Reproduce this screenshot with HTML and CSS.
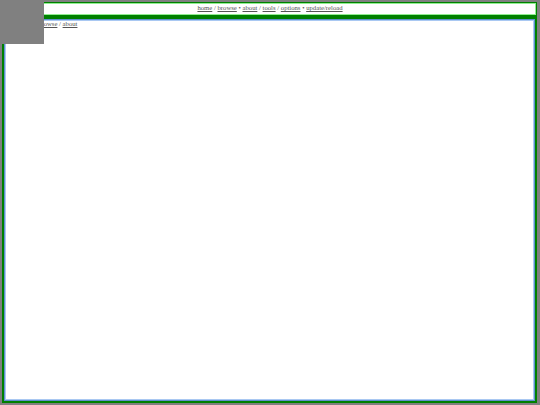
FILE: index.html
```html
<!DOCTYPE html>
<html>
<head>
<meta charset="utf-8">
<link rel="stylesheet" href="styles.css">
</head>
<body>
<div class="frame">
  <div class="topbar">
    <a href="#">home</a> / <a href="#">browse</a> &bull; <a href="#">about</a> / <a href="#">tools</a> / <a href="#">options</a> &bull; <a href="#">update/reload</a>
  </div>
  <div class="content">
    <div class="crumbs"><a href="#">home</a> / <a href="#">browse</a> / <a href="#">about</a></div>
  </div>
</div>
<div class="corner"></div>
</body>
</html>
```
FILE: styles.css
```css
html, body {
  margin: 0;
  padding: 0;
  height: 100%;
}
body {
  background: #808080;
  font-family: "Liberation Serif", "Times New Roman", serif;
  font-size: 6.7px;
  color: #555;
}
a {
  color: #555;
  text-decoration: underline;
}
.frame {
  position: absolute;
  left: 2px;
  top: 2px;
  right: 3px;
  bottom: 2px;
  background: #008000;
  padding: 1px 2px 2px 2px;
  display: flex;
  flex-direction: column;
  gap: 4px;
}
.topbar {
  background: #fff;
  border: 1px solid #90ee90;
  height: 10px;
  line-height: 8px;
  text-align: center;
  margin-right: -1px;
}
.content {
  flex: 1;
  background: #fff;
  border: 1px solid #5f8fcc;
  box-shadow: inset 0 0 0 1px #a9c8f2;
  padding: 0 4px;
}
.crumbs {
  line-height: 8px;
  padding-left: 9px;
}
.corner {
  position: absolute;
  left: 0;
  top: 0;
  width: 44px;
  height: 44px;
  background: #808080;
}
```
